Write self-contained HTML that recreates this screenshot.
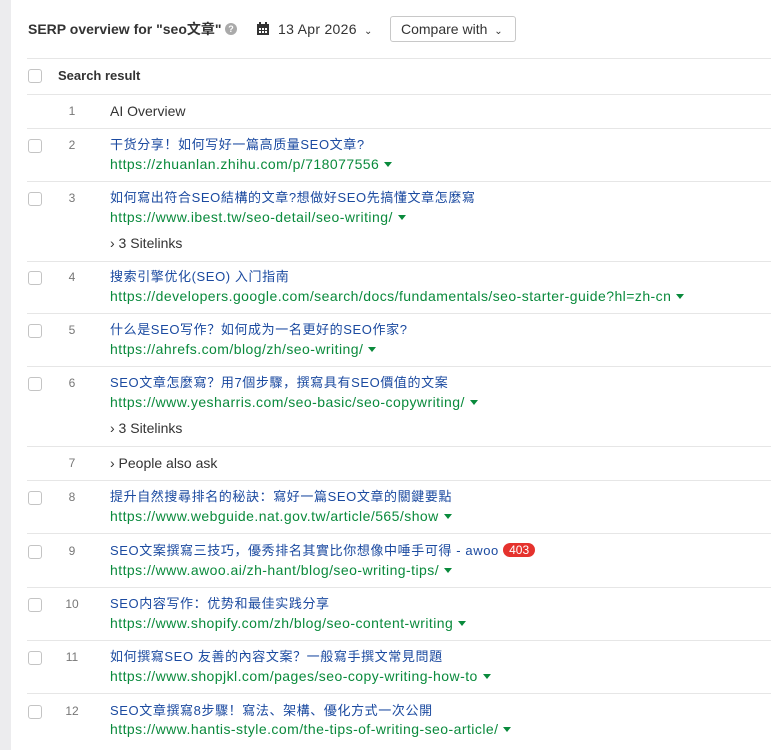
<!DOCTYPE html>
<html><head><meta charset="utf-8"><style>
*{margin:0;padding:0;box-sizing:border-box}
body{width:771px;height:750px;overflow:hidden;background:#fff;font-family:"Liberation Sans","Noto Sans CJK SC",sans-serif;position:relative;color:#333}
.strip{position:absolute;left:0;top:0;width:11px;height:750px;background:#ececee}
.a{position:absolute;white-space:nowrap;line-height:18px}
.hl{position:absolute;left:27px;right:0;height:1px;background:#e6e6e6}
.cb{position:absolute;left:28px;width:14px;height:14px;border:1px solid #c4c4c4;border-radius:3px;background:#fff}
.n{position:absolute;width:20px;text-align:center;left:62px;font-size:12px;color:#777;line-height:18px}
.t{left:110px;font-size:13px;letter-spacing:0.6px;color:#1b4aa0}
.u{left:110px;font-size:14px;letter-spacing:0.45px;color:#0a8a3c}
.u:after{content:"";display:inline-block;margin-left:5px;border-left:4px solid transparent;border-right:4px solid transparent;border-top:5px solid #0a8a3c;vertical-align:2px}
.s{left:110px;font-size:14px;color:#333}
</style></head><body>
<div class="strip"></div>
<div class="a" style="left:28px;top:20px;font-size:14px;font-weight:bold;color:#333">SERP overview for "seo文章"</div>
<div style="position:absolute;left:225px;top:23px;width:12px;height:12px;border-radius:50%;background:#aaa;color:#fff;font-size:9px;text-align:center;line-height:12px;font-weight:bold">?</div>
<svg style="position:absolute;left:256px;top:22px" width="14" height="14" viewBox="0 0 14 14"><rect x="1" y="2" width="12" height="11" fill="#333"/><rect x="3" y="0" width="2" height="3" fill="#333"/><rect x="9" y="0" width="2" height="3" fill="#333"/><g fill="#fff"><rect x="3" y="6" width="2" height="2"/><rect x="6" y="6" width="2" height="2"/><rect x="9" y="6" width="2" height="2"/><rect x="3" y="9" width="2" height="2"/><rect x="6" y="9" width="2" height="2"/><rect x="9" y="9" width="2" height="2"/></g></svg>
<div class="a" style="left:278px;top:20px;font-size:14px;letter-spacing:0.3px;color:#333">13 Apr 2026 <span style="font-size:10px;margin-left:3px">⌄</span></div>
<div style="position:absolute;left:390px;top:16px;width:126px;height:26px;border:1px solid #c8c8c8;border-radius:3px;font-size:14px;line-height:24px;padding-left:10px;color:#333">Compare with <span style="font-size:10px;margin-left:3px">⌄</span></div>
<div class="hl" style="top:58px"></div>
<div class="cb" style="top:69px"></div>
<div class="a" style="left:58px;top:67px;font-size:13px;font-weight:bold;color:#333">Search result</div>
<div class="hl" style="top:94px"></div>
<div class="n" style="top:102px">1</div><div class="a s" style="top:102px">AI Overview</div>
<div class="hl" style="top:128px"></div>

<div class="cb" style="top:139px"></div><div class="n" style="top:136px">2</div>
<div class="a t" style="top:136px">干货分享！如何写好一篇高质量SEO文章?</div>
<div class="a u" style="top:155px">https://zhuanlan.zhihu.com/p/718077556</div>
<div class="hl" style="top:181px"></div>

<div class="cb" style="top:192px"></div><div class="n" style="top:189px">3</div>
<div class="a t" style="top:189px">如何寫出符合SEO結構的文章?想做好SEO先搞懂文章怎麼寫</div>
<div class="a u" style="top:208px">https://www.ibest.tw/seo-detail/seo-writing/</div>
<div class="a s" style="top:234px">› 3 Sitelinks</div>
<div class="hl" style="top:261px"></div>

<div class="cb" style="top:271px"></div><div class="n" style="top:268px">4</div>
<div class="a t" style="top:268px">搜索引擎优化(SEO) 入门指南</div>
<div class="a u" style="top:287px">https://developers.google.com/search/docs/fundamentals/seo-starter-guide?hl=zh-cn</div>
<div class="hl" style="top:313px"></div>

<div class="cb" style="top:324px"></div><div class="n" style="top:321px">5</div>
<div class="a t" style="top:321px">什么是SEO写作？如何成为一名更好的SEO作家?</div>
<div class="a u" style="top:340px">https://ahrefs.com/blog/zh/seo-writing/</div>
<div class="hl" style="top:366px"></div>

<div class="cb" style="top:377px"></div><div class="n" style="top:374px">6</div>
<div class="a t" style="top:374px">SEO文章怎麼寫？用7個步驟，撰寫具有SEO價值的文案</div>
<div class="a u" style="top:393px">https://www.yesharris.com/seo-basic/seo-copywriting/</div>
<div class="a s" style="top:419px">› 3 Sitelinks</div>
<div class="hl" style="top:446px"></div>

<div class="n" style="top:454px">7</div><div class="a s" style="top:454px">› People also ask</div>
<div class="hl" style="top:480px"></div>

<div class="cb" style="top:491px"></div><div class="n" style="top:488px">8</div>
<div class="a t" style="top:488px">提升自然搜尋排名的秘訣：寫好一篇SEO文章的關鍵要點</div>
<div class="a u" style="top:507px">https://www.webguide.nat.gov.tw/article/565/show</div>
<div class="hl" style="top:533px"></div>

<div class="cb" style="top:545px"></div><div class="n" style="top:542px">9</div>
<div class="a t" style="top:542px">SEO文案撰寫三技巧，優秀排名其實比你想像中唾手可得 - awoo <span style="display:inline-block;background:#e5322d;color:#fff;font-size:12px;letter-spacing:0;line-height:14px;padding:0 6px;border-radius:7px;vertical-align:1px">403</span></div>
<div class="a u" style="top:561px">https://www.awoo.ai/zh-hant/blog/seo-writing-tips/</div>
<div class="hl" style="top:587px"></div>

<div class="cb" style="top:598px"></div><div class="n" style="top:595px">10</div>
<div class="a t" style="top:595px">SEO内容写作：优势和最佳实践分享</div>
<div class="a u" style="top:614px">https://www.shopify.com/zh/blog/seo-content-writing</div>
<div class="hl" style="top:640px"></div>

<div class="cb" style="top:651px"></div><div class="n" style="top:648px">11</div>
<div class="a t" style="top:648px">如何撰寫SEO 友善的內容文案？一般寫手撰文常見問題</div>
<div class="a u" style="top:667px">https://www.shopjkl.com/pages/seo-copy-writing-how-to</div>
<div class="hl" style="top:693px"></div>

<div class="cb" style="top:705px"></div><div class="n" style="top:702px">12</div>
<div class="a t" style="top:702px">SEO文章撰寫8步驟！寫法、架構、優化方式一次公開</div>
<div class="a u" style="top:720px">https://www.hantis-style.com/the-tips-of-writing-seo-article/</div>
</body></html>
